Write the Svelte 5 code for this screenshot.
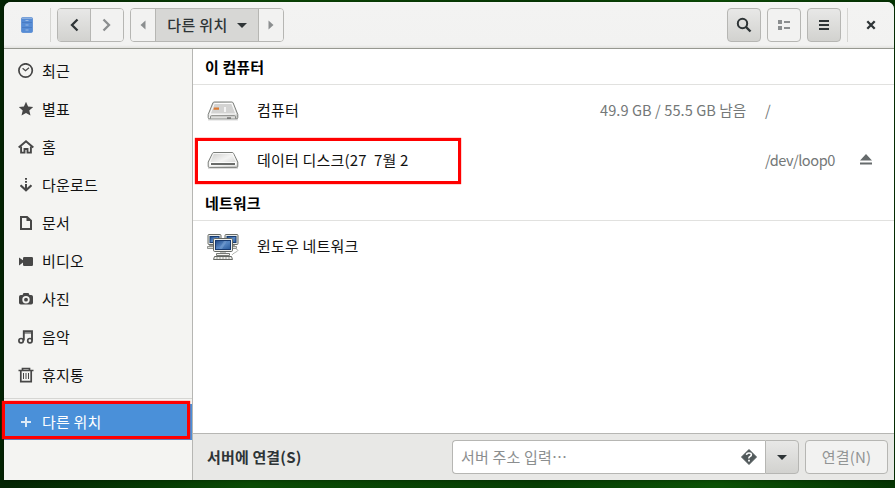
<script>
  const places = [
    ['recent', '최근'],
    ['star', '별표'],
    ['home', '홈'],
    ['download', '다운로드'],
    ['document', '문서'],
    ['video', '비디오'],
    ['photo', '사진'],
    ['music', '음악'],
    ['trash', '휴지통'],
  ];
</script>

{#snippet icon(name)}
  <svg class="icon" width="16" height="16" viewBox="0 0 16 16" fill="none" stroke="currentColor" stroke-width="2">
    {#if name === 'recent'}
      <circle cx="7.6" cy="7.5" r="6.7" stroke-width="1.7" />
      <path d="M4.6 5.2 7.5 7.7 11 4.8" stroke-width="1.2" />
    {:else if name === 'star'}
      <path d="M8 .8 10.1 5.5 15.2 6 11.3 9.5 12.5 14.5 8 11.9 3.5 14.5 4.7 9.5.8 6l5.1-.5z" fill="currentColor" stroke="none" />
    {:else if name === 'home'}
      <path d="M.7 8.4 8 2.2 15.3 8.4" />
      <path d="M3.1 7.5v6.1h3.4V10h3v3.6h3.4V7.5" stroke-width="1.9" />
    {:else if name === 'download'}
      <path d="M8 1v1.700M8 4v1.700M8 7v6" />
      <path d="M2.500 8.300 8 13.300l5.500-5" stroke-width="2.200" />
    {:else if name === 'document'}
      <path d="M3 2v12h10V5.8L9 2z" />
      <path d="M8.5 1.5V6H13z" fill="currentColor" stroke="none" />
    {:else if name === 'video'}
      <path d="M1 4.400 5 7.300V5.2A1.200 1.200 0 0 1 6.200 4h7.600A1.200 1.200 0 0 1 15 5.200v6.600a1.200 1.200 0 0 1-1.200 1.200H6.200A1.200 1.200 0 0 1 5 11.800V9.500l-4 3z" fill="currentColor" stroke="none" />
    {:else if name === 'photo'}
      <path fill-rule="evenodd" d="M5.5 2h5l1 2h1.7A1.8 1.8 0 0 1 15 5.800v6a1.800 1.800 0 0 1-1.800 1.800H2.800A1.800 1.800 0 0 1 1 11.800v-6A1.800 1.800 0 0 1 2.800 4h1.700zM8 5a3.700 3.700 0 1 0 0 7.400A3.700 3.700 0 0 0 8 5z" fill="currentColor" stroke="none" />
      <circle cx="8" cy="8.700" r="1.900" fill="currentColor" stroke="none" />
    {:else if name === 'music'}
      <circle cx="3.100" cy="11.700" r="2.200" stroke-width="1.700" />
      <circle cx="11.900" cy="11.700" r="2.200" stroke-width="1.700" />
      <path d="M5.800 11.500V2.300H14v9.200" stroke-width="1.900" />
      <path d="M6 4h8" stroke-width="1" />
    {:else if name === 'trash'}
      <path d="M.5 3.500h15M4.500 3V1.500h7V3M2.800 3.500v11.200h10.400V3.500" stroke-width="1.700" />
      <path d="M5.500 6v6M8 6v6M10.500 6v6" stroke-width="1" />
    {:else if name === 'plus'}
      <path d="M8 3v10M3 8h10" />
    {:else if name === 'back'}
      <path d="M10.500 2.500 5 8l5.500 5.500" stroke-width="2.300" />
    {:else if name === 'forward'}
      <path d="M5.500 2.500 11 8l-5.500 5.500" stroke-width="2.300" />
    {:else if name === 'left'}
      <path d="M10.500 3.500v9L5.500 8z" fill="currentColor" stroke="none" />
    {:else if name === 'right'}
      <path d="M5.500 3.500v9l5-4.500z" fill="currentColor" stroke="none" />
    {:else if name === 'down'}
      <path d="M3 6h10l-5 5z" fill="currentColor" stroke="none" />
    {:else if name === 'search'}
      <circle cx="6.500" cy="6.500" r="4.700" stroke-width="2" />
      <path d="m10 10 4.500 4.500" stroke-width="2.400" />
    {:else if name === 'list'}
      <path d="M2 3h4v4H2zM2 9h4v4H2zM8 4h6v2H8zM8 10h6v2H8z" fill="currentColor" stroke="none" />
    {:else if name === 'menu'}
      <path d="M3 4h10M3 8h10M3 12h10" />
    {:else if name === 'close'}
      <path d="m4.300 4.300 7.400 7.400m0-7.400-7.400 7.400" stroke-width="2.300" />
    {:else if name === 'eject'}
      <path d="M8 2 14 8.500H2zM2 10.500h12v2H2z" fill="currentColor" stroke="none" />
    {/if}
  </svg>
{/snippet}

{#snippet disk(system)}
  <svg class="device" width="32" height="32" viewBox="0 0 32 32">
    <defs>
      <linearGradient id="metal" x1="0" y1="0" x2="1" y2="1">
        <stop offset="0" stop-color="#c9c9c7" />
        <stop offset=".5" stop-color="#f3f3f2" />
        <stop offset="1" stop-color="#c6c6c4" />
      </linearGradient>
    </defs>
    {#if system}
      <path d="M1 24h30v2.500H1z" fill="#000" opacity=".14" />
      <path d="M7.200 8h17.600q1 0 1.400 1l4.600 11.500v3q0 1.200-1.200 1.200H2.400q-1.200 0-1.200-1.200v-3L5.800 9q.4-1 1.400-1z" fill="url(#metal)" stroke="#7b7e7a" />
      <path d="M7.300 9.500h17.400l4.200 10.500H3.100z" fill="#d3d3d2" stroke="#fff" stroke-width=".9" />
      <path d="M7 13.500h5v2.300H6.400z" fill="#db7a32" />
      <path d="M18 13v5" stroke="#fff" stroke-width="1.500" />
      <path d="M3.500 24.500v-1.800q0-1 1-1h23q1 0 1 1v1.800" fill="#dededc" stroke="#858783" />
      <path d="M20 24h4" stroke="#444" />
    {:else}
      <path d="M1 23h30v2H1z" fill="#000" opacity=".14" />
      <path d="M6.800 8.500h18.400q1 0 1.400 1l4.200 8.500v4.200q0 1.200-1.200 1.200H2.400q-1.200 0-1.200-1.200V18L5.400 9.500q.4-1 1.400-1z" fill="url(#metal)" stroke="#7b7e7a" />
      <path d="M6.500 9.500h19l3.900 9H2.600z" fill="none" stroke="#fff" opacity=".75" />
      <path d="M2.500 18.500h27v3h-27z" fill="#fff" />
      <path d="M4 20h24" stroke="#393b39" stroke-width="1.300" />
    {/if}
  </svg>
{/snippet}

<div class="desktop">
  <div class="window">
    <header>
      <svg class="app" width="20" height="20" viewBox="0 0 20 20">
        <rect x="4.500" y="2.500" width="11" height="15" rx="1.200" fill="#568cd5" stroke="#6695d6" />
        <path d="M5 3.200h10" stroke="#8db0de" stroke-width="1.500" />
        <path d="M5 7.500h10M5 12.500h10" stroke="#4a7cc4" />
        <path d="M8.500 5.500h3M8.500 10h3M8.500 15h3" stroke="#9dbbe4" />
      </svg>
      <i class="rule first"></i>
      <div class="group nav">
        <button class="raised">{@render icon('back')}</button>
        <button class="dim">{@render icon('forward')}</button>
      </div>
      <div class="group path">
        <button class="dim">{@render icon('left')}</button>
        <button class="crumb"><span class="tx">다른 위치</span>{@render icon('down')}</button>
        <button class="dim">{@render icon('right')}</button>
      </div>
      <div class="tools">
        <button class="tool raised">{@render icon('search')}</button>
        <button class="tool dim">{@render icon('list')}</button>
        <button class="tool raised">{@render icon('menu')}</button>
      </div>
      <i class="rule last"></i>
      <button class="close">{@render icon('close')}</button>
    </header>

    <div class="body">
      <aside>
        {#each places as [name, label]}
          <div class="place">{@render icon(name)}<span class="tx">{label}</span></div>
        {/each}
        <div class="split"></div>
        <div class="place active">{@render icon('plus')}<span class="tx">다른 위치</span></div>
      </aside>

      <main>
        <h2>이 컴퓨터</h2>
        <div class="row computer">
          {@render disk(true)}
          <span class="tx name">컴퓨터</span>
          <span class="tx free">49.9 GB / 55.5 GB 남음</span>
          <span class="tx mount">/</span>
        </div>
        <div class="row data">
          {@render disk(false)}
          <span class="tx name disk-name">데이터 디스크(27&nbsp; 7월 2</span>
          <span class="tx mount loop">/dev/loop0</span>
          {@render icon('eject')}
        </div>
        <h2 class="second">네트워크</h2>
        <div class="row network">
          <svg class="device" width="32" height="32" viewBox="0 0 32 32">
            <defs>
              <linearGradient id="screen" x1="0" y1="0" x2="1" y2="1">
                <stop offset="0" stop-color="#1d4684" />
                <stop offset=".5" stop-color="#5787c4" />
                <stop offset="1" stop-color="#285899" />
              </linearGradient>
              <g id="terminal">
                <path d="M2.500 12.500h8v2h-8zM.5 15.500h12v2H.5z" fill="#dfe0dc" stroke="#777a75" stroke-width=".8" />
                <rect x="1" y="3.500" width="13" height="10" rx="1" fill="#e9eae6" stroke="#696c67" />
                <rect x="3" y="5.500" width="9" height="6" fill="url(#screen)" stroke="#183c70" />
              </g>
            </defs>
            <use href="#terminal" />
            <use href="#terminal" x="17" />
            <path d="M13 19h6v3h-6z" fill="#bfc1bc" />
            <path d="M9.500 22.500h13v2h-13z" fill="#f3f3f0" stroke="#777a75" />
            <path d="m7.500 25.500-1 3h19l-1-3z" fill="#f1f1ee" stroke="#666964" />
            <path d="M9 27h14" stroke="#999c96" stroke-dasharray="2 1" />
            <path d="M29 18q4 1 0 3t-4 3" fill="none" stroke="#b3b5b0" />
            <rect x="6.500" y="7.500" width="19" height="13" rx="1.200" fill="#f0f1ed" stroke="#646762" />
            <rect x="8.500" y="9.500" width="15" height="9" fill="url(#screen)" stroke="#173a70" />
            <path d="m12 18 5-8h3l-5 8z" fill="#83a9d8" opacity=".45" />
          </svg>
          <span class="tx name">윈도우 네트워크</span>
        </div>
        <footer>
          <b class="connect-label">서버에 연결(S)</b>
          <div class="entry">
            <span class="tx">서버 주소 입력⋯</span>
            <svg width="18" height="18" viewBox="0 0 18 18">
              <path d="m9 1.500 7.500 7.500L9 16.500 1.500 9z" fill="#51595b" stroke="#51595b" stroke-linejoin="round" />
              <path d="M6.500 6.800Q6.700 5 9 5t2.400 1.700Q11.400 7.900 10 8.500T9 10.500" fill="none" stroke="#fff" stroke-width="1.600" />
              <path d="M8.100 11.800h1.800v1.800H8.100z" fill="#fff" />
            </svg>
          </div>
          <button class="drop">{@render icon('down')}</button>
          <button class="connect"><span class="tx">연결(N)</span></button>
        </footer>
      </main>
    </div>
  </div>
  <div class="mark disk-mark"></div>
  <div class="mark place-mark"></div>
</div>

<style>
  :global(body) { margin: 0; }
  .desktop, .desktop * { box-sizing: border-box; }
  .desktop {
    position: relative;
    width: 895px;
    height: 488px;
    padding: 2px 1px 8px 4px;
    overflow: hidden;
    background: linear-gradient(90deg, #042404, #063b03 18%, #0b4b05 28%, #073e04 60%, #0c5206 80%, #053503);
    font: 15px/20px "Noto Sans", "Noto Sans CJK KR", sans-serif;
    color: #111;
  }
  .window {
    height: 478px;
    display: flex;
    flex-direction: column;
    border-radius: 7px 7px 0 0;
    overflow: hidden;
    background: #fff;
    box-shadow: 0 0 4px #0006;
  }
  .tx { white-space: nowrap; font-family: "Noto Sans CJK KR", sans-serif; letter-spacing: .2px; }
  .icon, svg { display: block; flex: none; }
  button { border: 0; padding: 0; margin: 0; background: none; font: inherit; color: #2e3436; display: flex; align-items: center; justify-content: center; }
  header {
    height: 47px;
    flex: none;
    display: flex;
    align-items: flex-start;
    padding: 6px 0 0 13px;
    background: linear-gradient(#f7f7f6, #f3f3f2 3px, #f2f2f1 43px, #e2e2df);
    border-bottom: 1px solid #969890;
  }
  .app { margin-top: 7px; }
  .rule { width: 1px; height: 34px; background: #d5d5d2; }
  .first { margin-left: 13px; }
  .group { height: 34px; display: flex; border: 1px solid #b6b6b3; border-radius: 4px; overflow: hidden; }
  .group button + button { border-left: 1px solid #b6b6b3; }
  .nav { width: 67px; margin-left: 6px; }
  .nav button { width: 33px; }
  .nav .raised { width: 32px; padding-left: 2px; }
  .nav .dim { padding-right: 3px; }
  .raised { background: linear-gradient(#e8e8e7, #d2d2cf); }
  .dim { color: #8b8e8f; background: #f2f2f1; }
  .path { width: 154px; margin-left: 6px; }
  .path .dim { width: 25px; }
  .path .dim:first-child { width: 24px; }
  .path .crumb { width: 103px; gap: 6px; background: #d7d7d5; padding-left: 3px; }
  .crumb .tx { font-weight: 500; letter-spacing: .35px; }
  .tools { display: flex; gap: 6px; margin-left: auto; }
  .tool { width: 34px; height: 34px; border: 1px solid #b6b6b3; border-radius: 4px; }
  .last { margin-left: 6px; }
  .close { width: 46px; height: 34px; }
  .body { flex: 1; min-height: 0; display: flex; }
  aside { width: 189px; flex: none; padding-top: 3px; background: #f4f4f2; border-right: 1px solid #b6b6b3; }
  .place { height: 38px; display: flex; align-items: center; gap: 8px; padding-left: 14px; }
  .place .icon { color: #474747; }
  .split { height: 10px; padding-top: 4px; }
  .split::before { content: ""; display: block; height: 1px; background: #d6d6d3; }
  .active { height: 36px; background: #4a90d9; color: #fff; }
  .place.active .icon { color: #dbe9f7; }
  main { flex: 1; min-width: 0; display: flex; flex-direction: column; }
  h2 { margin: 0; height: 36px; padding: 8px 0 0 12px; border-bottom: 1px solid #e1e1df; font: 700 15px/20px "Noto Sans CJK KR", sans-serif; letter-spacing: .1px; color: #000; }
  .second { height: 36px; padding-top: 8px; }
  .row { display: flex; align-items: center; padding: 0 20px 0 14px; }
  .name { margin-left: 18px; }
  .computer { height: 50px; padding-right: 39px; }
  .data { height: 50px; }
  .network { height: 50px; }
  .network .device { margin-top: 2px; }
  .free { margin-left: auto; width: 147px; color: #747878; font-size: 14.600px; letter-spacing: .07px; }
  .mount { width: 90px; margin-left: 18px; color: #747878; font-size: 14.600px; letter-spacing: 0; }
  .mount.loop { margin-left: auto; width: 93px; letter-spacing: -.45px; }
  .data .icon { color: #666b6c; }
  footer { height: 47px; margin-top: auto; display: flex; align-items: center; padding: 0 6px 0 14px; background: #e8e8e6; border-top: 1px solid #b6b6b3; }
  .connect-label { font: 700 15px/20px "Noto Sans CJK KR", sans-serif; letter-spacing: .15px; color: #2e3436; }
  .entry { width: 313px; height: 34px; margin-left: auto; padding: 0 7px 0 8px; display: flex; align-items: center; justify-content: space-between; background: #fff; border: 1px solid #b6b6b3; border-right: 0; border-radius: 4px 0 0 4px; color: #8b8e8f; }
  .drop { width: 34px; height: 34px; border: 1px solid #b6b6b3; border-radius: 0 4px 4px 0; background: linear-gradient(#e8e8e7, #d2d2cf); }
  .connect { width: 83px; height: 34px; margin-left: 6px; border: 1px solid #b6b6b3; border-radius: 4px; background: #f2f2f1; color: #929595; }
  .mark { position: absolute; border: 3px solid #f00; box-shadow: 0 0 1px #f00; pointer-events: none; }
  .disk-mark { left: 195px; top: 138px; width: 266px; height: 46px; }
  .place-mark { left: 2px; top: 401px; width: 188px; height: 38px; }
</style>
